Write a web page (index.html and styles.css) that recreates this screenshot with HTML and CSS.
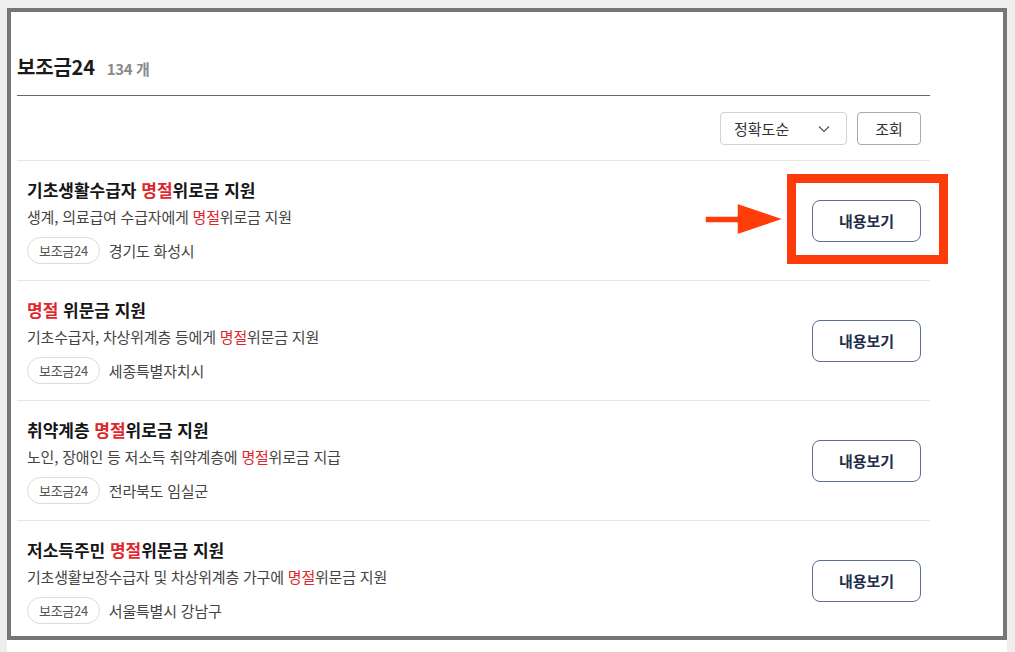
FILE: index.html
```html
<!DOCTYPE html>
<html lang="ko">
<head>
<meta charset="utf-8">
<title>보조금24</title>
<link rel="stylesheet" href="styles.css">
</head>
<body>
<div class="frame">
  <div class="content">
    <div class="header">
      <h2 class="title">보조금24</h2>
      <span class="count">134 개</span>
    </div>
    <div class="toolbar">
      <div class="select">
        <span>정확도순</span>
        <svg class="chev" width="12" height="8" viewBox="0 0 12 8"><path d="M1 1.5 L6 6.5 L11 1.5" fill="none" stroke="#555" stroke-width="1.2"/></svg>
      </div>
      <button class="search-btn">조회</button>
    </div>
    <ul class="list">
      <li class="item">
        <div class="info">
          <div class="item-title">기초생활수급자 <em>명절</em>위로금 지원</div>
          <div class="item-desc">생계, 의료급여 수급자에게 <em>명절</em>위로금 지원</div>
          <div class="meta"><span class="tag">보조금24</span><span class="region">경기도 화성시</span></div>
        </div>
        <button class="view-btn">내용보기</button>
      </li>
      <li class="item">
        <div class="info">
          <div class="item-title"><em>명절</em> 위문금 지원</div>
          <div class="item-desc">기초수급자, 차상위계층 등에게 <em>명절</em>위문금 지원</div>
          <div class="meta"><span class="tag">보조금24</span><span class="region">세종특별자치시</span></div>
        </div>
        <button class="view-btn">내용보기</button>
      </li>
      <li class="item">
        <div class="info">
          <div class="item-title">취약계층 <em>명절</em>위로금 지원</div>
          <div class="item-desc">노인, 장애인 등 저소득 취약계층에 <em>명절</em>위로금 지급</div>
          <div class="meta"><span class="tag">보조금24</span><span class="region">전라북도 임실군</span></div>
        </div>
        <button class="view-btn">내용보기</button>
      </li>
      <li class="item">
        <div class="info">
          <div class="item-title">저소득주민 <em>명절</em>위문금 지원</div>
          <div class="item-desc">기초생활보장수급자 및 차상위계층 가구에 <em>명절</em>위문금 지원</div>
          <div class="meta"><span class="tag">보조금24</span><span class="region">서울특별시 강남구</span></div>
        </div>
        <button class="view-btn">내용보기</button>
      </li>
    </ul>
  </div>
  <div class="highlight-box"></div>
  <svg class="arrow" width="84" height="38" viewBox="0 0 84 38">
    <path d="M2 15 H34 V2 L81 18 L34 34 V22 H2 Z" fill="#ff3d0a" stroke="#fff" stroke-width="1.5" stroke-linejoin="round"/>
  </svg>
</div>
<div class="below"></div>
</body>
</html>
```
FILE: styles.css
```css
html, body {
  margin: 0;
  padding: 0;
}
body {
  background: #eeeeee;
  font-family: "Noto Sans CJK KR", "Noto Sans", sans-serif;
  color: #222;
  padding-top: 8px;
  padding-left: 7px;
  width: 1000px;
}
.frame {
  position: relative;
  box-sizing: border-box;
  width: 1000px;
  height: 632px;
  border: 4px solid #767676;
  background: #fff;
  overflow: hidden;
}
.below {
  height: 20px;
  background: #fff;
}
.content {
  width: 913px;
  margin-left: 6px;
}
.header {
  display: flex;
  align-items: baseline;
  gap: 12px;
  padding-top: 40px;
  padding-bottom: 13px;
  border-bottom: 1px solid #666;
}
.title {
  margin: 0;
  font-size: 20px;
  line-height: 30px;
  font-weight: 700;
  letter-spacing: -0.2px;
  color: #1a1a1a;
}
.count {
  font-size: 15px;
  font-weight: 700;
  color: #8a8a8a;
  letter-spacing: -0.4px;
}
.toolbar {
  display: flex;
  justify-content: flex-end;
  gap: 10px;
  padding-top: 16px;
  padding-right: 9px;
  padding-bottom: 15px;
}
.select {
  box-sizing: border-box;
  width: 127px;
  height: 33px;
  border: 1px solid #d2d2d2;
  border-radius: 4px;
  display: flex;
  align-items: center;
  justify-content: space-between;
  padding: 0 16px 0 13px;
  font-size: 15px;
  color: #333;
}
.chev {
  display: block;
}
.search-btn {
  box-sizing: border-box;
  width: 64px;
  height: 33px;
  border: 1px solid #a9a9a9;
  border-radius: 4px;
  background: #fff;
  font-family: inherit;
  font-size: 15px;
  color: #333;
  padding: 0;
}
.list {
  list-style: none;
  margin: 0;
  padding: 0;
}
.item {
  box-sizing: border-box;
  height: 120px;
  border-top: 1px solid #e6e6e6;
  display: flex;
  align-items: center;
  justify-content: space-between;
  padding: 0 9px 0 10px;
}
.info {
  display: flex;
  flex-direction: column;
}
.item-title {
  font-size: 17px;
  line-height: 24px;
  font-weight: 700;
  color: #161616;
  letter-spacing: 0;
}
em {
  font-style: normal;
  color: #e0262d;
}
.item-desc {
  margin-top: 4px;
  font-size: 15px;
  line-height: 22px;
  color: #444;
  letter-spacing: -0.2px;
}
.meta {
  margin-top: 9px;
  display: flex;
  align-items: center;
  gap: 9px;
}
.tag {
  box-sizing: border-box;
  height: 27px;
  display: inline-flex;
  align-items: center;
  padding: 0 11px;
  border: 1px solid #dcdcdc;
  border-radius: 14px;
  font-size: 13px;
  color: #555;
  letter-spacing: -0.3px;
}
.region {
  font-size: 15px;
  color: #444;
  letter-spacing: -0.2px;
}
.view-btn {
  box-sizing: border-box;
  width: 109px;
  height: 42px;
  border: 1px solid #5b6e8a;
  border-radius: 8px;
  background: #fff;
  font-family: inherit;
  font-size: 15px;
  font-weight: 700;
  color: #1f2d4d;
  padding: 0;
}
.highlight-box {
  position: absolute;
  left: 776px;
  top: 162px;
  width: 161px;
  height: 90px;
  box-sizing: border-box;
  border: 9px solid #fd3a0a;
}
.arrow {
  position: absolute;
  left: 692px;
  top: 189px;
}
```
